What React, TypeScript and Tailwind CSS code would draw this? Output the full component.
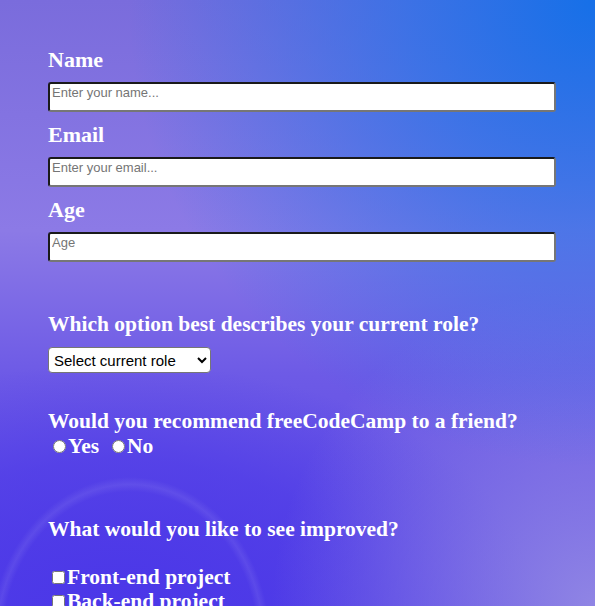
import React from "react";

const serif = "font-['Liberation_Serif','Times_New_Roman',serif]";

const TextField = ({ id, label, type, placeholder }: { id: string; label: string; type: string; placeholder: string }) => (
  <div className="flex flex-col">
    <label htmlFor={id} className={`${serif} text-[22px] font-bold leading-[30px] text-white mb-[7px]`}>
      {label}
    </label>
    <input
      id={id}
      type={type}
      placeholder={placeholder}
      className="w-[508px] h-[30px] bg-white rounded-[3px] border-2 border-t-[#1a1a1a] border-l-[#1a1a1a] border-r-[#767676] border-b-[#767676] px-[2px] pb-[9px] pt-0 text-[13px] font-['Liberation_Sans',Arial,sans-serif] placeholder:text-[#757575] outline-none"
    />
  </div>
);

const App = () => {
  return (
    <div className="min-h-screen w-full bg-fixed bg-[radial-gradient(ellipse_140px_165px_at_130px_642px,rgba(255,255,255,0)_91%,rgba(255,255,255,0.08)_95.5%,rgba(255,255,255,0)_100%),radial-gradient(circle_at_100%_0%,#1670e8_0%,rgba(40,115,232,0.75)_22%,rgba(60,120,232,0)_55%),radial-gradient(circle_at_100%_100%,rgba(150,140,228,0.9)_0%,rgba(150,140,228,0)_38%),radial-gradient(ellipse_70%_40%_at_20%_100%,rgba(75,55,232,1)_0%,rgba(75,55,232,0.6)_60%,rgba(75,55,232,0)_100%),linear-gradient(180deg,#7a6cdc_0%,#8c7ae6_38%,#6d5ae6_62%,#5644e6_100%)]">
      <form className="flex flex-col pl-[48px] pt-[45px] pb-10">
        <div className="flex flex-col gap-[8px]">
          <TextField id="name" label="Name" type="text" placeholder="Enter your name..." />
          <TextField id="email" label="Email" type="email" placeholder="Enter your email..." />
          <TextField id="age" label="Age" type="number" placeholder="Age" />
        </div>

        <p className={`${serif} mt-[47px] text-[21.5px] font-bold leading-[30px] text-white`}>
          Which option best describes your current role?
        </p>
        <select
          defaultValue=""
          className="mt-[8px] w-[163px] h-[26px] bg-white rounded-[4px] border border-[#767676] pl-[1px] text-[15px] text-black font-['Liberation_Sans',Arial,sans-serif]"
        >
          <option value="" disabled>
            Select current role
          </option>
          <option>Student</option>
          <option>Full Time Job</option>
          <option>Full Time Learner</option>
          <option>Prefer not to say</option>
          <option>Other</option>
        </select>

        <p className={`${serif} mt-[33px] text-[21.5px] font-bold leading-[30px] text-white`}>
          Would you recommend freeCodeCamp to a friend?
        </p>
        <div className={`${serif} flex items-center pl-[5px] -mt-[3px] text-[21.5px] font-bold leading-[26px] text-white`}>
          <label className="flex items-center">
            <input type="radio" name="recommend" className="m-0 mr-[2px] w-[13px] h-[13px]" />
            Yes
          </label>
          <label className="flex items-center ml-[13px]">
            <input type="radio" name="recommend" className="m-0 mr-[2px] w-[13px] h-[13px]" />
            No
          </label>
        </div>

        <p className={`${serif} mt-[55px] text-[21.5px] font-bold leading-[30px] text-white`}>
          What would you like to see improved?
        </p>
        <div className={`${serif} mt-[21px] flex flex-col pl-[4px] text-[21.5px] font-bold leading-[24px] text-white`}>
          {["Front-end project", "Back-end project", "Data Visualization", "Challenges", "Open Source Community"].map((item) => (
            <label key={item} className="flex items-center">
              <input type="checkbox" className="m-0 mr-[2px] w-[13px] h-[13px]" />
              {item}
            </label>
          ))}
        </div>
      </form>
    </div>
  );
};

export default App;
